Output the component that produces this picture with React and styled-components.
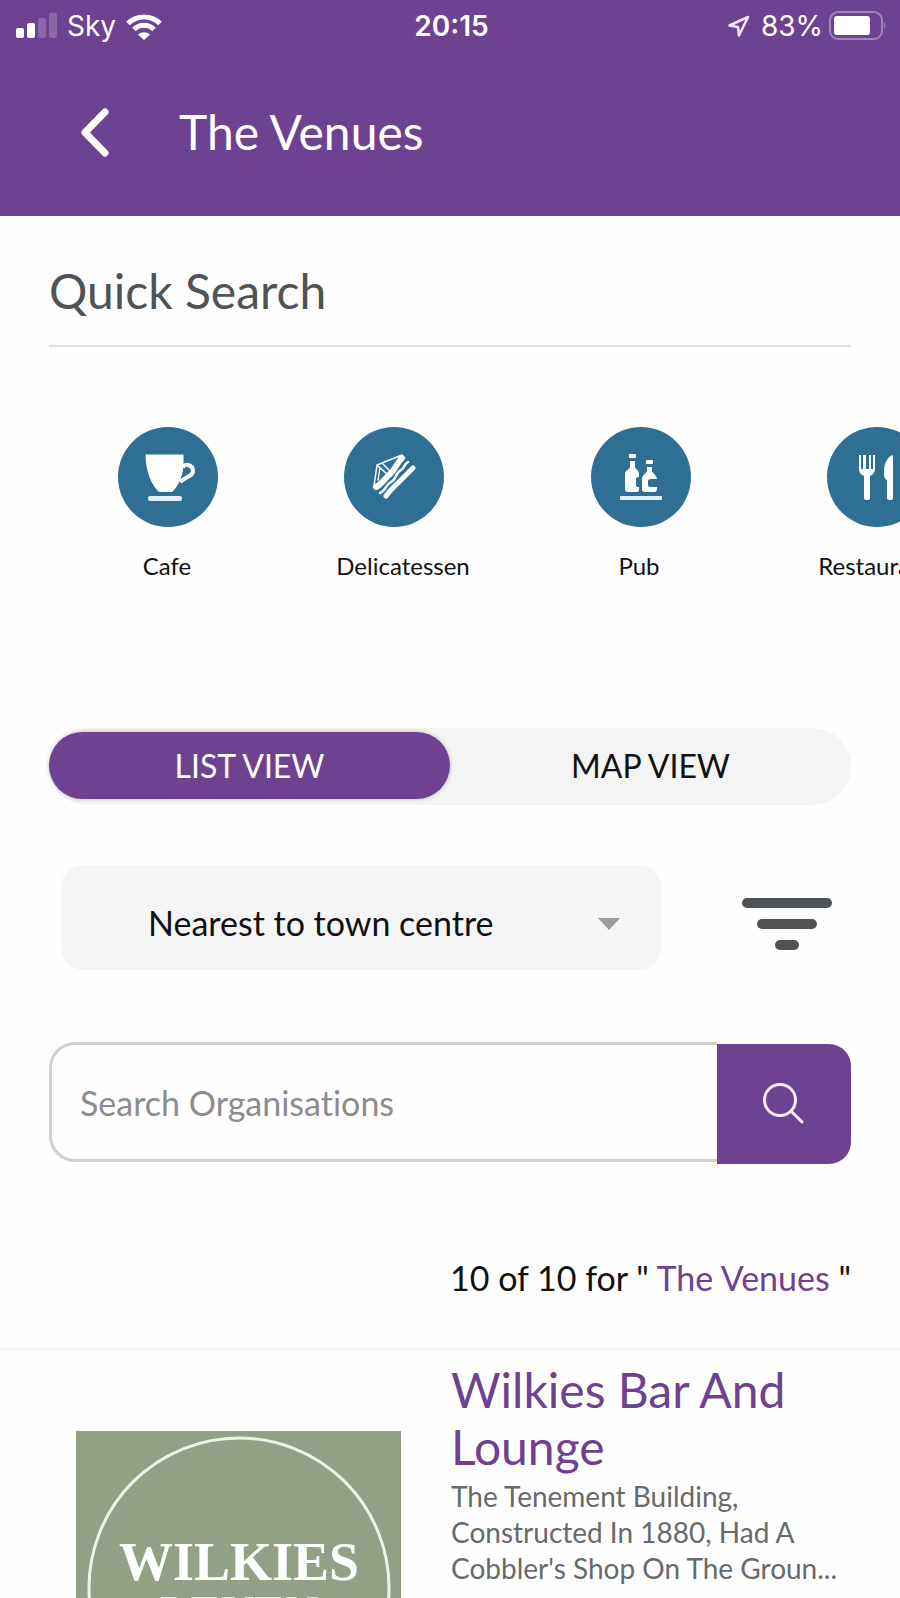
import React, { useState } from 'react'
import styled, { createGlobalStyle } from 'styled-components'

const PURPLE = '#6f4191'
const BLUE = '#2f6f93'
const GREY = '#505355'

const GlobalStyle = createGlobalStyle`
  * {
    box-sizing: border-box;
  }
  body {
    margin: 0;
    background: #fefefe;
    color: #111;
    font-family: 'Trebuchet MS', Lato, sans-serif;
    font-variant-ligatures: none;
  }
  h1, h2, h3, p, ul {
    margin: 0;
    padding: 0;
    font-weight: 400;
  }
  button, input, select {
    margin: 0;
    padding: 0;
    border: 0;
    background: none;
    color: inherit;
    font: inherit;
    font-variant-ligatures: none;
  }
`

const Screen = styled.div`
  height: 100vh;
  overflow: hidden;
`

const Header = styled.header`
  padding-bottom: 4px;
  background: ${PURPLE};
  color: #fff;
`

const StatusBar = styled.div`
  display: grid;
  grid-template-columns: 1fr auto 1fr;
  align-items: center;
  height: 52px;
  padding: 0 13px 0 16px;
  font: 28px/32px Inter, sans-serif;
`

const StatusGroup = styled.div`
  display: flex;
  align-items: center;
  justify-content: ${props => (props.$end ? 'flex-end' : 'flex-start')};
  gap: ${props => (props.$end ? '6px' : '10px')};
`

const Clock = styled.time`
  font-weight: 600;
`

const NavBar = styled.nav`
  display: flex;
  align-items: center;
  gap: 66px;
  height: 160px;
  padding-left: 77px;
`

const BackButton = styled.button`
  display: flex;
`

const PageTitle = styled.h1`
  font-size: 48px;
  line-height: 58px;
`

const Main = styled.main`
  padding: 46px 49px 48px;
`

const SectionTitle = styled.h2`
  padding-bottom: 25px;
  border-bottom: 2px solid #dedede;
  color: ${GREY};
  font-size: 48px;
  line-height: 58px;
`

const CategoryList = styled.ul`
  display: flex;
  margin: 80px -49px 0 0;
  overflow: hidden;
  list-style: none;
`

const CategoryItem = styled.li`
  flex: 0 0 236px;
`

const CategoryButton = styled.button`
  display: flex;
  flex-direction: column;
  align-items: center;
  gap: 24px;
  width: 100%;
  font-size: 24px;
  line-height: 30px;
`

const Tabs = styled.div`
  display: flex;
  align-items: flex-start;
  height: 77px;
  margin-top: 147px;
  padding-top: 4px;
  border-radius: 39px;
  background: #f4f4f4;
`

const Tab = styled.button`
  flex: 1;
  height: 67px;
  border-radius: 34px;
  background: ${props => (props.$active ? PURPLE : 'transparent')};
  box-shadow: ${props => (props.$active ? '0 0 4px rgba(0, 0, 0, 0.25)' : 'none')};
  color: ${props => (props.$active ? '#fff' : '#111')};
  font-size: 32px;
  line-height: 42px;
`

const SortRow = styled.div`
  display: flex;
  gap: 62px;
  margin-top: 60px;
  padding-left: 12px;
`

const SelectBox = styled.label`
  display: grid;
  flex: 1;
  align-items: center;
  height: 105px;
  border-radius: 22px;
  background: #f5f5f5;

  > * {
    grid-area: 1 / 1;
  }
  > svg {
    justify-self: end;
    margin-right: 40px;
    margin-top: 12px;
    pointer-events: none;
  }
`

const Select = styled.select`
  width: 100%;
  height: 100%;
  padding: 10px 80px 0 87px;
  appearance: none;
  font-size: 34px;
  line-height: 42px;
`

const FilterButton = styled.button`
  display: flex;
  align-items: center;
  justify-content: center;
  width: 128px;
  padding-top: 12px;
`

const SearchForm = styled.form`
  display: flex;
  align-items: flex-start;
  margin-top: 72px;
`

const SearchInput = styled.input`
  flex: 1;
  min-width: 0;
  height: 120px;
  padding: 0 28px;
  border: 3px solid #d0d0d0;
  border-right: 0;
  border-radius: 26px 0 0 26px;
  font-size: 34px;

  &::placeholder {
    color: #8c8c8c;
    opacity: 1;
  }
`

const SearchButton = styled.button`
  display: flex;
  align-items: center;
  justify-content: center;
  width: 134px;
  height: 120px;
  margin-top: 2px;
  border-radius: 0 22px 22px 0;
  background: ${PURPLE};
`

const ResultCount = styled.p`
  margin-top: 93px;
  font-size: 34px;
  line-height: 42px;
  text-align: right;

  span {
    color: ${PURPLE};
  }
`

const VenueCard = styled.article`
  display: flex;
  gap: 50px;
  padding: 10px 49px 50px 76px;
  border-top: 4px solid #f6f6f6;
`

const VenueLogo = styled.svg`
  flex: none;
  margin-top: 70px;
  background: #92a185;
`

const VenueName = styled.h3`
  margin-bottom: 3px;
  color: ${PURPLE};
  font-size: 48px;
  line-height: 57px;
`

const VenueText = styled.p`
  color: #666a6c;
  font-size: 28px;
  line-height: 36px;
`

const Cup = () => (
  <>
    <path
      d="M-22.500-22.500H15.500V-12C15.500-3 10 10 4 15H-9C-17 8-22.500-7-22.500-22.500Z"
      fill="#fff"
    />
    <path
      d="M15-10C18-14 25-12 25-6C25-1 19-1 12 5"
      fill="none"
      stroke="#fff"
      strokeWidth="4"
    />
    <rect x="-20" y="19" width="34" height="5" rx="2" fill="#e3eef5" />
  </>
)

const Sandwich = () => (
  <g fill="none" stroke="#fff" strokeLinecap="round" strokeLinejoin="round">
    <path d="M-20 9L-17-12L8-22M-17-12L-7-3M-14-9L-16 3M-12-14L-5-7" strokeWidth="1.500" />
    <path d="M-18 10C-12 7-9 1-4-3C0-6 3-14 8-19" strokeWidth="6" />
    <path d="M-14 16C-8 14-9 8-3 5C3 2 1-4 7-7C11-9 9-12 14-15" strokeWidth="2.500" />
    <path d="M-8 19C-3 12 2 8 5 5L19-9" strokeWidth="5" />
  </g>
)

const Bottles = () => (
  <g fill="#fff">
    <rect x="-12" y="-23" width="7" height="4" rx="1" />
    <path d="M-11-16H-6V-10C-5-7-2-7-2-3V0H-3Q-5 0-5 2V8Q-5 10-3 10H-2V13Q-2 15-4 15H-13Q-16 15-16 12V-3C-16-7-12-7-11-10Z" />
    <rect x="5" y="-17" width="7" height="4" rx="1" />
    <path d="M6-10H11V-6C12-3 15-3 16 2H10Q7 2 7 4V8Q7 10 10 10H16V12Q16 15 13 15H4Q1 15 1 12V3C1-3 5-3 6-6Z" />
    <rect x="-21" y="19" width="42" height="4" rx="1" fill="#e3eef5" />
  </g>
)

const Cutlery = () => (
  <g fill="#fff">
    <path d="M-18-22H-16V-8H-14V-22H-11V-8H-8V-22H-6V-8H-4V-22H-2V-8Q-2-3-7-1V21Q-7 23-10 23Q-13 23-13 21V-1Q-18-3-18-8Z" />
    <path d="M16-22V21Q16 23 13 23Q10 23 10 21V3C7 2 7-2 7-6C7-14 11-21 16-22Z" />
  </g>
)

// cx is where the disc sits inside the 120px wide artwork
const categories = [
  { name: 'Cafe', cx: 61, Icon: Cup },
  { name: 'Delicatessen', cx: 51, Icon: Sandwich },
  { name: 'Pub', cx: 62, Icon: Bottles },
  { name: 'Restaurant', cx: 62, Icon: Cutlery }
]

const CategoryIcon = ({ cx, Icon }) => (
  <svg width="120" height="100" viewBox="0 0 120 100" overflow="visible" aria-hidden="true">
    <g transform={`translate(${cx} 50)`}>
      <circle r="50" fill={BLUE} />
      <Icon />
    </g>
  </svg>
)

const SignalIcon = () => (
  <svg width="41" height="26" viewBox="0 0 41 26" fill="#fff" aria-hidden="true">
    <rect x="0" y="15" width="8" height="10" rx="2" />
    <rect x="11" y="10" width="8" height="15" rx="2" />
    <rect x="22" y="5" width="8" height="20" rx="2" opacity="0.2" />
    <rect x="33" y="0" width="8" height="25" rx="2" opacity="0.2" />
  </svg>
)

const WifiIcon = () => (
  <svg width="36" height="27" viewBox="0 0 36 27" aria-hidden="true">
    <g fill="none" stroke="#fff" strokeWidth="5">
      <path d="M2 10.500A23 23 0 0 1 34 10.500" />
      <path d="M8 16.500A14 14 0 0 1 28 16.500" />
    </g>
    <path d="M18 27L12 21.500A9 9 0 0 1 24 21.500Z" fill="#fff" />
  </svg>
)

const LocationIcon = () => (
  <svg width="28" height="24" viewBox="0 0 28 24" aria-hidden="true">
    <path
      d="M21 3L2.500 11.500L11 13L12 21.500Z"
      fill="none"
      stroke="#f2e8fa"
      strokeWidth="2.500"
      strokeLinejoin="round"
    />
  </svg>
)

const BatteryIcon = () => (
  <svg width="58" height="30" viewBox="0 0 58 30" aria-hidden="true">
    <rect x="1" y="1" width="52" height="27" rx="8" fill="none" stroke="#a184b8" strokeWidth="2" />
    <rect x="5" y="5" width="36" height="19" rx="3" fill="#fff" />
    <path d="M55 11Q58 14.500 55 18Z" fill="#a184b8" />
  </svg>
)

export default function App() {
  const [view, setView] = useState('list')

  return (
    <Screen>
      <GlobalStyle />
      <Header>
        <StatusBar>
          <StatusGroup>
            <SignalIcon />
            <span>Sky</span>
            <WifiIcon />
          </StatusGroup>
          <Clock>20:15</Clock>
          <StatusGroup $end>
            <LocationIcon />
            <span>83%</span>
            <BatteryIcon />
          </StatusGroup>
        </StatusBar>
        <NavBar>
          <BackButton aria-label="Back">
            <svg width="36" height="52" viewBox="0 0 36 52" aria-hidden="true">
              <path
                d="M28 6L8 26.500L28 47"
                fill="none"
                stroke="#fff"
                strokeWidth="7"
                strokeLinecap="round"
                strokeLinejoin="round"
              />
            </svg>
          </BackButton>
          <PageTitle>The Venues</PageTitle>
        </NavBar>
      </Header>

      <Main>
        <SectionTitle>Quick Search</SectionTitle>
        <CategoryList>
          {categories.map(category => (
            <CategoryItem key={category.name}>
              <CategoryButton>
                <CategoryIcon cx={category.cx} Icon={category.Icon} />
                {category.name}
              </CategoryButton>
            </CategoryItem>
          ))}
        </CategoryList>

        <Tabs>
          <Tab $active={view === 'list'} onClick={() => setView('list')}>
            LIST VIEW
          </Tab>
          <Tab $active={view === 'map'} onClick={() => setView('map')}>
            MAP VIEW
          </Tab>
        </Tabs>

        <SortRow>
          <SelectBox>
            <Select aria-label="Sort by">
              <option>Nearest to town centre</option>
            </Select>
            <svg width="24" height="14" viewBox="0 0 24 14" aria-hidden="true">
              <path d="M1 1H23L12 13Z" fill="#9b9b9b" />
            </svg>
          </SelectBox>
          <FilterButton aria-label="Filter">
            <svg width="92" height="52" viewBox="0 0 92 52" fill={GREY} aria-hidden="true">
              <rect x="1" y="0" width="90" height="10" rx="5" />
              <rect x="16" y="21" width="60" height="10" rx="5" />
              <rect x="34" y="42" width="24" height="10" rx="5" />
            </svg>
          </FilterButton>
        </SortRow>

        <SearchForm onSubmit={e => e.preventDefault()}>
          <SearchInput placeholder="Search Organisations" aria-label="Search Organisations" />
          <SearchButton aria-label="Search">
            <svg width="44" height="44" viewBox="0 0 44 44" aria-hidden="true">
              <g fill="none" stroke="#f6edfb" strokeWidth="3" strokeLinecap="round">
                <circle cx="18" cy="18" r="15.500" />
                <path d="M29 29L40 40" />
              </g>
            </svg>
          </SearchButton>
        </SearchForm>

        <ResultCount>
          10 of 10 for &quot; <span>The Venues</span> &quot;
        </ResultCount>
      </Main>

      <VenueCard>
        <VenueLogo width="325" height="325" viewBox="0 0 325 325">
          <circle cx="163" cy="157" r="150" fill="none" stroke="#eef3ea" strokeWidth="3" />
          <g
            fill="#fff"
            textAnchor="middle"
            fontFamily="'Liberation Serif', serif"
            fontWeight="700"
          >
            <text x="163" y="149" fontSize="54">WILKIES</text>
            <text x="163" y="197" fontSize="46" opacity="0.7">LEVEN</text>
          </g>
        </VenueLogo>
        <div>
          <VenueName>Wilkies Bar And Lounge</VenueName>
          <VenueText>
            The Tenement Building, Constructed In 1880, Had A Cobbler&#39;s Shop On The Groun...
          </VenueText>
        </div>
      </VenueCard>
    </Screen>
  )
}
